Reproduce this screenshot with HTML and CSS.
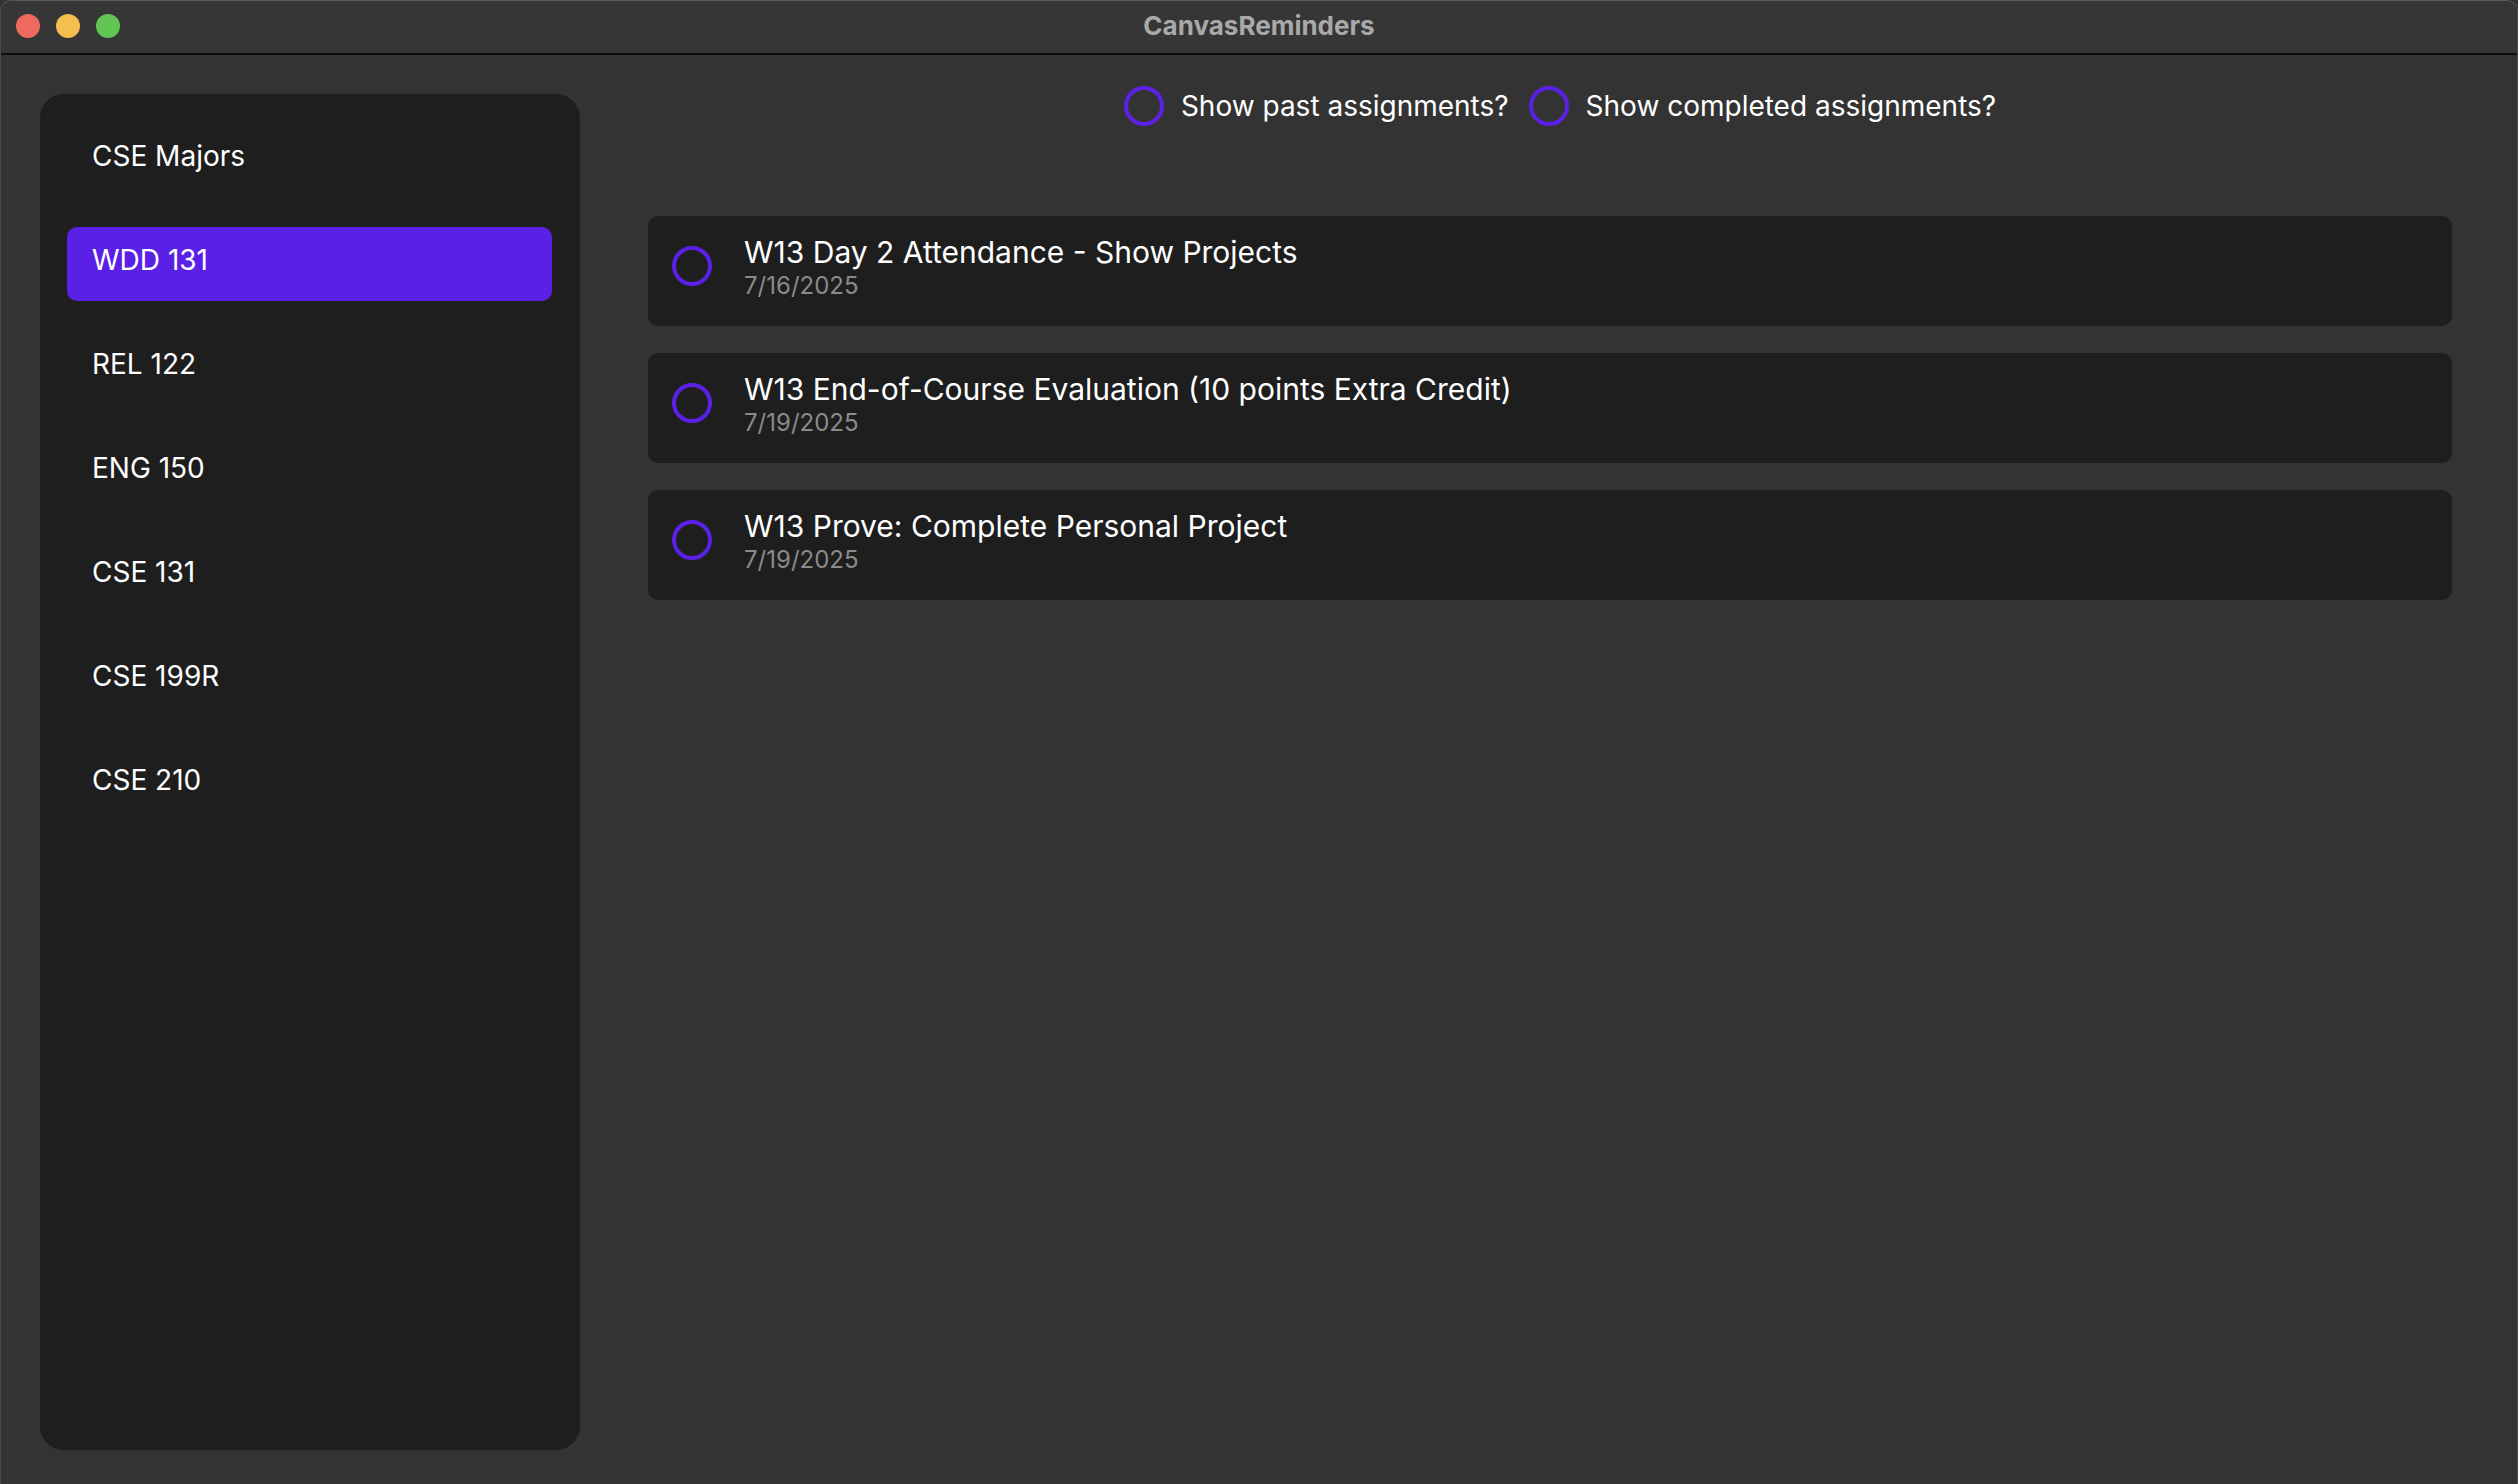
FILE: index.html
```html
<!DOCTYPE html>
<html>
<head>
<meta charset="utf-8">
<link rel="stylesheet" href="styles.css">
</head>
<body>
<div class="window">
  <header class="titlebar">
    <div class="lights">
      <span class="light red"></span>
      <span class="light yellow"></span>
      <span class="light green"></span>
    </div>
    <div class="title">CanvasReminders</div>
  </header>
  <div class="content">
    <nav class="sidebar">
      <div class="item">CSE Majors</div>
      <div class="item active">WDD 131</div>
      <div class="item">REL 122</div>
      <div class="item">ENG 150</div>
      <div class="item">CSE 131</div>
      <div class="item">CSE 199R</div>
      <div class="item">CSE 210</div>
    </nav>
    <main class="main">
      <div class="toggles">
        <label class="toggle"><span class="ring"></span><span>Show past assignments?</span></label>
        <label class="toggle"><span class="ring"></span><span>Show completed assignments?</span></label>
      </div>
      <div class="cards">
        <div class="card">
          <span class="ring card-ring"></span>
          <div class="card-text">
            <div class="card-title">W13 Day 2 Attendance - Show Projects</div>
            <div class="card-date">7/16/2025</div>
          </div>
        </div>
        <div class="card">
          <span class="ring card-ring"></span>
          <div class="card-text">
            <div class="card-title">W13 End-of-Course Evaluation (10 points Extra Credit)</div>
            <div class="card-date">7/19/2025</div>
          </div>
        </div>
        <div class="card">
          <span class="ring card-ring"></span>
          <div class="card-text">
            <div class="card-title">W13 Prove: Complete Personal Project</div>
            <div class="card-date">7/19/2025</div>
          </div>
        </div>
      </div>
    </main>
  </div>
</div>
</body>
</html>
```

FILE: styles.css
```css
* { box-sizing: border-box; }
html, body {
  margin: 0;
  padding: 0;
  width: 2518px;
  height: 1484px;
  overflow: hidden;
  background: #333333;
  font-family: Inter, "Noto Sans", "Liberation Sans", sans-serif;
  color: #ffffff;
}
.window {
  width: 2518px;
  height: 1484px;
  display: flex;
  flex-direction: column;
  background: #333333;
  border-radius: 12px 12px 0 0;
  border-top: 1px solid #5a5a5a;
  border-left: 1px solid #4a4a4a;
  border-right: 1px solid #4a4a4a;
}
.titlebar {
  height: 54px;
  flex: 0 0 54px;
  background: #363636;
  border-bottom: 2px solid #0c0c0c;
  display: flex;
  align-items: center;
  justify-content: center;
  position: relative;
  border-radius: 12px 12px 0 0;
}
.lights {
  position: absolute;
  left: 15px;
  top: 13px;
  display: flex;
  gap: 16px;
}
.light {
  width: 24px;
  height: 24px;
  border-radius: 50%;
  display: block;
}
.red { background: #ee6a5f; }
.yellow { background: #f5bf4f; }
.green { background: #61c554; }
.title {
  font-size: 26px;
  font-weight: 700;
  color: #a9a9a9;
  margin-top: -3px;
}
.content {
  flex: 1;
  display: flex;
  padding: 31px 0 34px 39px;
}
.sidebar {
  width: 540px;
  flex: 0 0 540px;
  margin-top: 8px;
  background: #1e1e1e;
  border-radius: 24px;
  padding: 29px 28px 0 27px;
  display: flex;
  flex-direction: column;
  gap: 30px;
}
.item {
  height: 74px;
  display: flex;
  align-items: center;
  padding-left: 25px;
  padding-bottom: 8px;
  font-size: 28px;
  border-radius: 10px;
  color: #ffffff;
}
.item.active {
  background: #5b20e6;
}
.main {
  flex: 1;
  padding: 0 65px 0 68px;
  display: flex;
  flex-direction: column;
}
.toggles {
  display: flex;
  justify-content: center;
  gap: 20px;
  height: 40px;
  padding-left: 20px;
}
.toggle {
  display: flex;
  align-items: center;
  gap: 17px;
  font-size: 28px;
}
.ring {
  width: 40px;
  height: 40px;
  flex: 0 0 40px;
  border: 4px solid #5b20e6;
  border-radius: 50%;
  display: block;
}
.card-ring {
  margin-top: -10px;
}
.cards {
  margin-top: 90px;
  display: flex;
  flex-direction: column;
  gap: 27px;
}
.card {
  height: 110px;
  background: #1e1e1e;
  border-radius: 10px;
  display: flex;
  align-items: center;
  padding-left: 24px;
  gap: 32px;
}
.card-text {
  display: flex;
  flex-direction: column;
  margin-top: -10px;
}
.card-title {
  font-size: 30px;
  line-height: 36px;
  color: #ffffff;
}
.card-date {
  font-size: 24px;
  line-height: 26px;
  margin-top: 3px;
  color: #8a8a8a;
}
```
